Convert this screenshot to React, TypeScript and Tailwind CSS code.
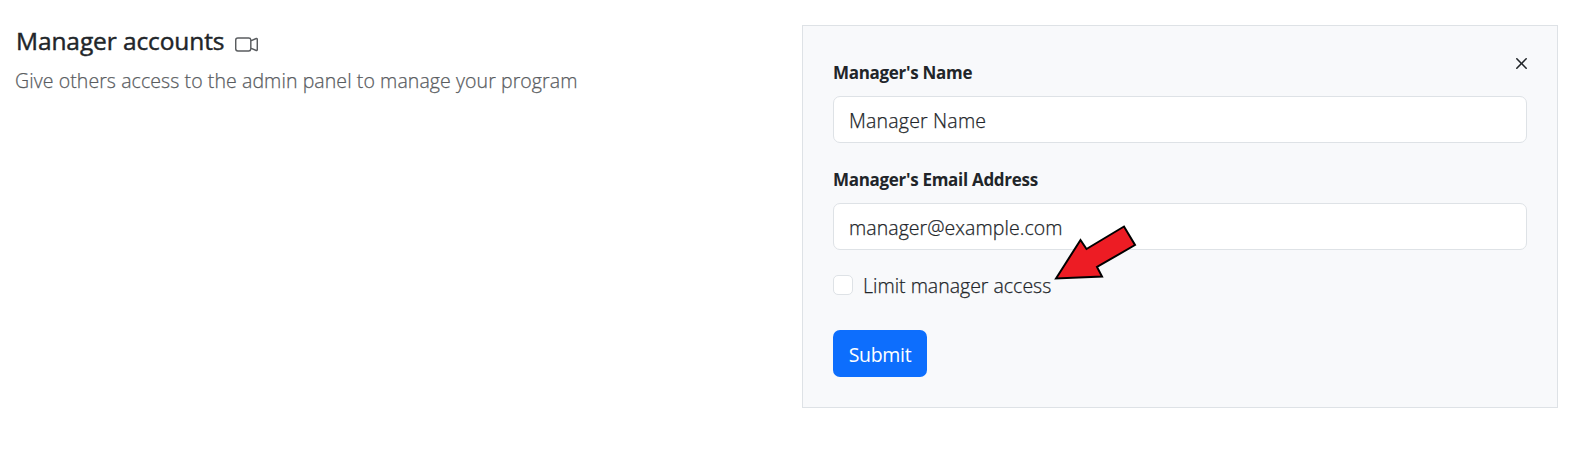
import { BsCameraVideo, BsX } from "react-icons/bs";

function Field({ label, value, valueClass }: { label: string; value: string; valueClass: string }) {
  return (
    <div className="mb-[30px]">
      <div className="h-[30px] text-[17px] leading-[14px] font-bold tracking-[-0.3px] whitespace-nowrap">{label}</div>
      <div className="flex h-[47px] items-center rounded-[7px] border border-[#dee2e6] bg-white pt-[2px] pl-[15px] text-[19.5px] font-light whitespace-nowrap [-webkit-text-stroke:0.25px_#212529]">
        <span className={valueClass}>{value}</span>
      </div>
    </div>
  );
}

export default function App() {
  return (
    <div className="flex h-[454px] w-[1574px] bg-white pt-[25px] pl-4 font-['Open_Sans','Noto_Sans',sans-serif] text-[#212529]">
      <div className="w-[786px] whitespace-nowrap">
        <div className="flex h-[34px] items-center">
          <h1 className="-mt-[2px] text-[24.5px] leading-[34px] font-normal tracking-[-0.1px] [-webkit-text-stroke:0.45px_#212529]">Manager accounts</h1>
          <BsCameraVideo className="mt-[4px] ml-[11px] size-[23px] text-[#595c5f]" />
        </div>
        <p className="-ml-px mt-[6px] text-[19.5px] leading-[32px] font-light tracking-[0.085px] text-[#595c5f] [-webkit-text-stroke:0.25px_#595c5f]">
          Give others access to the admin panel to manage your program
        </p>
      </div>
      <div className="relative h-[383px] w-[756px] border border-[#dee2e6] bg-[#f8f9fb] px-[30px] pt-[30px]">
        <button className="absolute top-[25px] right-[23px]" aria-label="Close">
          <BsX className="size-[25px]" />
        </button>
        <div className="pt-[10px]">
          <Field label="Manager's Name" value="Manager Name" valueClass="tracking-[0.2px]" />
          <Field label="Manager's Email Address" value="manager@example.com" valueClass="tracking-[0.06px]" />
        </div>
        <label className="-mt-[5px] flex h-[20px] items-center whitespace-nowrap">
          <span className="size-5 rounded-[5px] border border-[#dee2e6] bg-white" />
          <span className="ml-[10px] pt-[2px] text-[19.5px] leading-[28px] font-light [-webkit-text-stroke:0.25px_#212529]">Limit manager access</span>
        </label>
        <button className="mt-[35px] flex h-[47px] w-[94px] items-center justify-center rounded-[7px] bg-[#0d6efd] pt-[3px] text-[19.5px] tracking-[-0.3px] text-white">
          Submit
        </button>
        <svg className="absolute top-[195px] left-[247px]" width="90" height="62" viewBox="1050 221 90 62">
          <path d="M1056 278.5 L1080.5 240 L1086.5 249 L1124 226.5 L1135 245 L1097 267 L1102 276.5 Z" fill="#ed1c24" stroke="#000" strokeWidth="2" />
        </svg>
      </div>
    </div>
  );
}
